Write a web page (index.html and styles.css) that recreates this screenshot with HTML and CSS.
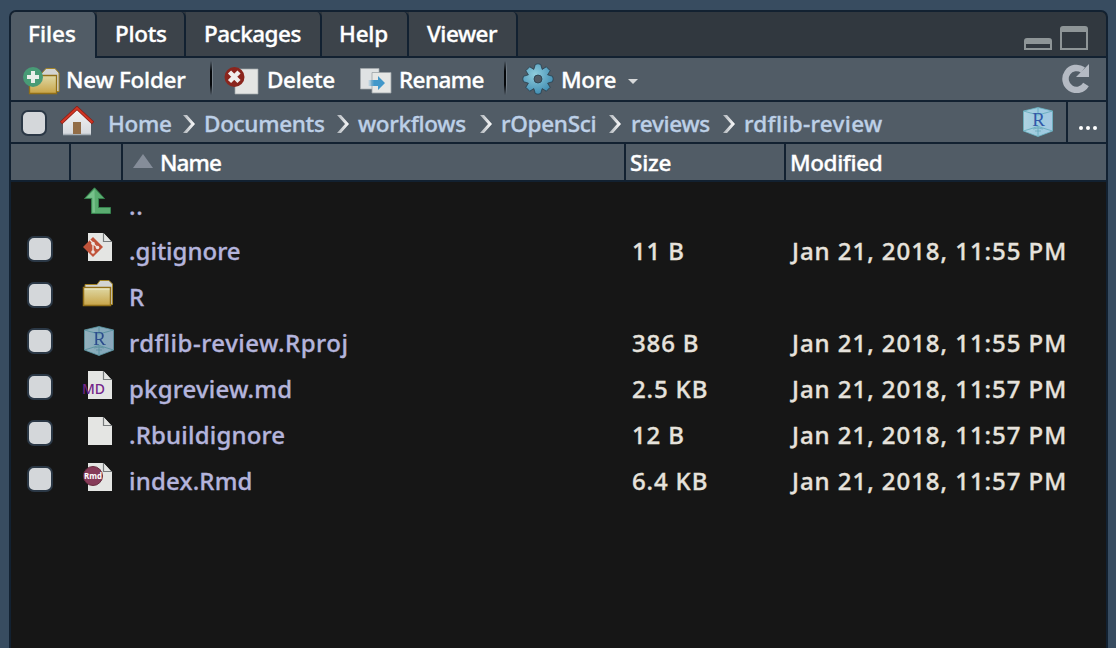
FILE: index.html
```html
<!DOCTYPE html>
<html lang="en">
<head>
<meta charset="utf-8">
<title>Files</title>
<link rel="stylesheet" href="styles.css">
</head>
<body>
<svg class="defs" width="0" height="0" aria-hidden="true">
  <defs>
    <linearGradient id="gold" x1="0" y1="0" x2="0" y2="1"><stop offset="0" stop-color="#dfd9a6"/><stop offset="1" stop-color="#c8a447"/></linearGradient>
    <linearGradient id="cube" x1="0" y1="0" x2="1" y2="0"><stop offset="0" stop-color="#b0d3e2"/><stop offset=".5" stop-color="#9ccbdf"/><stop offset="1" stop-color="#a6c9e4"/></linearGradient>
    <radialGradient id="gear" cx=".4" cy=".35" r=".65"><stop offset="0" stop-color="#8fcddd"/><stop offset="1" stop-color="#438fb4"/></radialGradient>
    <linearGradient id="wall" x1="0" y1="0" x2="0" y2="1"><stop offset="0" stop-color="#f4f4f5"/><stop offset="1" stop-color="#d5d9de"/></linearGradient>
    <linearGradient id="arrow" x1="0" y1="0" x2="1" y2="0"><stop offset="0" stop-color="#4298ca" stop-opacity="0"/><stop offset=".35" stop-color="#4298ca"/></linearGradient>
    <symbol id="folder" viewBox="0 0 32 28">
      <path d="M3 8V5.500H15L18 1.500H27L30.500 5V25.500H27" fill="#d3d4d3" stroke="#a28325"/>
      <path d="M1.500 8.500H28.500V26.500H1.500Z" fill="url(#gold)" stroke="#927019" stroke-width="1.500"/>
      <path d="M2.500 10H27.500" stroke="#f1edcc"/>
    </symbol>
    <symbol id="page" viewBox="0 0 32 28">
      <path d="M6 0H22L30 9V28H6Z" fill="#e4e5e3"/>
      <path d="M21.500 0V8.500H30.500" fill="none" stroke="#777b7c" stroke-width="1.200"/>
      <path d="M22 0L31 9" stroke="#161616" stroke-width=".7"/>
    </symbol>
    <symbol id="rproj" viewBox="0 0 30 30">
      <path d="M15 .5L29.500 4V24L15 29.500L.5 24V4Z" fill="url(#cube)" stroke="#69b5c4" stroke-width=".8"/>
      <path d="M.5 4L15 8L29.500 4M15 20V29M.5 24L15 19.500L29.500 24M15 1V8" fill="none" stroke="#60a8b9" stroke-width=".8"/>
      <text x="15.500" y="18.500" class="cube-letter" text-anchor="middle">R</text>
      <path d="M10 22Q15 20 20 22M12 24H18" fill="none" stroke="#68a4b5" stroke-width=".7"/>
    </symbol>
  </defs>
</svg>

<main class="pane">
  <nav class="tabs">
    <div class="tab active w-files">Files</div>
    <div class="tab w-plots">Plots</div>
    <div class="tab w-packages">Packages</div>
    <div class="tab w-help">Help</div>
    <div class="tab w-viewer">Viewer</div>
    <svg class="window-icons" width="64" height="24" viewBox="0 0 64 24">
      <path fill-rule="evenodd" fill="#8e9597" d="M0 24V15Q0 12 3 12H25Q28 12 28 15V24ZM2 18V22H26V18Z"/>
      <path fill-rule="evenodd" fill="#8e9597" d="M36 24V3Q36 0 39 0H61Q64 0 64 3V24ZM38 6V22H62V6Z"/>
    </svg>
  </nav>

  <div class="toolbar">
    <div class="tool new">
      <svg width="38" height="30" viewBox="0 0 38 30">
        <path d="M18 8L23 2.500H32L36 7V25.500H33" fill="#d3d4d3" stroke="#a28325"/>
        <path d="M6.500 9.500H33.500V27.500H6.500Z" fill="url(#gold)" stroke="#927019" stroke-width="1.300"/>
        <circle cx="10" cy="11" r="10" fill="#489b76"/>
        <path d="M8 5H12V9H16V13H12V17H8V13H4V9H8Z" fill="#e9eeea"/>
      </svg>
      <span>New Folder</span>
    </div>
    <i class="separator"></i>
    <div class="tool delete">
      <svg width="35" height="30" viewBox="0 0 35 30">
        <path d="M11 3H34V28H11Z" fill="#e4e5e3" stroke="#a2a6a9" stroke-width=".7"/>
        <circle cx="10.500" cy="11" r="10" fill="#8b251d"/>
        <path d="M5.500 6L15 15.500M15 6L5.500 15.500" stroke="#f0eeec" stroke-width="4.500"/>
      </svg>
      <span>Delete</span>
    </div>
    <div class="tool rename">
      <svg width="32" height="28" viewBox="0 0 32 28">
        <path d="M.5 1.500H19V22H.5Z" fill="#dfe2e3" stroke="#a5abad" stroke-width=".7"/>
        <path d="M12 5.500H31V26H12Z" fill="#e6e7e5" stroke="#9da3a7" stroke-width=".8"/>
        <path d="M8 13H18V9L25 16L18 23V19H8Z" fill="url(#arrow)"/>
      </svg>
      <span>Rename</span>
    </div>
    <i class="separator"></i>
    <div class="tool more">
      <svg width="32" height="32" viewBox="-16 -16 32 32">
        <g fill="url(#gear)" stroke="#273e4b" stroke-width=".8">
          <path fill-rule="evenodd" d="M-4.200-9.600L-2.700-14.500Q0-16 2.700-14.500L4.200-9.600L8.300-12.200L12.200-8.300L9.600-4.200L14.500-2.700Q16 0 14.500 2.700L9.600 4.200L12.200 8.300L8.300 12.200L4.200 9.600L2.700 14.500Q0 16-2.700 14.500L-4.200 9.600L-8.300 12.200L-12.200 8.300L-9.600 4.200L-14.500 2.700Q-16 0-14.500-2.700L-9.600-4.200L-12.200-8.300L-8.300-12.200ZM4 0A4 4 0 1 0-4 0A4 4 0 1 0 4 0Z"/>
        </g>
      </svg>
      <span>More</span>
      <svg class="caret" width="10" height="5" viewBox="0 0 10 5"><path d="M0 0H10L5 5Z" fill="#d7d9da"/></svg>
    </div>
    <svg class="refresh" width="28" height="30" viewBox="0 0 28 30">
      <path d="M25 21.500A11 11 0 1 1 22 7" fill="none" stroke="#b4bac3" stroke-width="6.500"/>
      <path d="M28 1V14H15L20 9L23 6Z" fill="#b4bac3"/>
    </svg>
  </div>

  <div class="path">
    <i class="check"></i>
    <svg class="house" width="34" height="30" viewBox="0 0 34 30">
      <path d="M3 14L17 2L31 14V29H3Z" fill="url(#wall)"/>
      <path d="M3 28.500H31" stroke="#a7b0b7" stroke-width="1.500"/>
      <path d="M13 16H21V28H13Z" fill="#926d48"/>
      <path d="M1 17L17 2L33 17" fill="none" stroke="#8e1f18" stroke-width="3.500"/>
      <path d="M1.500 16.500L17 2L32.500 16.500" fill="none" stroke="#d13624" stroke-width="2"/>
    </svg>
    <div class="crumb c-home">Home</div>
    <div class="crumb c-documents">Documents</div>
    <div class="crumb c-workflows">workflows</div>
    <div class="crumb c-ropensci">rOpenSci</div>
    <div class="crumb c-reviews">reviews</div>
    <div class="crumb last">rdflib-review</div>
    <svg class="project" width="30" height="30"><use href="#rproj"/></svg>
    <div class="browse"><i></i><i></i><i></i></div>
  </div>

  <div class="grid head">
    <div></div><div></div>
    <div class="name-head"><svg width="20" height="14" viewBox="0 0 20 14"><path d="M0 14L10 0L20 14Z" fill="#858d99"/></svg>Name</div>
    <div class="size-head">Size</div>
    <div class="date-head">Modified</div>
  </div>

  <section class="files">
    <div class="grid row up">
      <div></div>
      <div class="icon"><svg width="32" height="28" viewBox="0 0 32 28"><path d="M12.500 .8L22.500 11.500H16.500V20.500H28.500V26.500H9.500V11.500H2.500Z" fill="#5aac70" stroke="#36814d"/><path d="M12.500 2.500L4.500 10.800H10.500V25.500H13Z" fill="#77c18b"/></svg></div>
      <div class="name">..</div><div></div><div></div>
    </div>
    <div class="grid row">
      <div class="cell-check"><i class="check"></i></div>
      <div class="icon"><svg width="32" height="28" viewBox="0 0 32 28"><use href="#page"/><path d="M1 14L11 4L21 14L11 24Z" fill="#c0533a"/><path d="M8 7L11 10V19M11 10.500L15.500 14.500" stroke="#eee3df" stroke-width="1.300" fill="none"/><circle cx="11" cy="10.500" r="1.800" fill="#eee3df"/><circle cx="11" cy="19" r="1.800" fill="#eee3df"/><circle cx="15.500" cy="14.500" r="1.800" fill="#eee3df"/></svg></div>
      <div class="name">.gitignore</div><div class="size">11 B</div><div class="date">Jan 21, 2018, 11:55 PM</div>
    </div>
    <div class="grid row">
      <div class="cell-check"><i class="check"></i></div>
      <div class="icon"><svg width="32" height="28"><use href="#folder"/></svg></div>
      <div class="name">R</div><div></div><div></div>
    </div>
    <div class="grid row">
      <div class="cell-check"><i class="check"></i></div>
      <div class="icon project-icon"><svg class="dim" width="30" height="30"><use href="#rproj"/></svg></div>
      <div class="name wide">rdflib-review.Rproj</div><div class="size">386 B</div><div class="date">Jan 21, 2018, 11:55 PM</div>
    </div>
    <div class="grid row">
      <div class="cell-check"><i class="check"></i></div>
      <div class="icon"><svg width="32" height="28" viewBox="0 0 32 28"><use href="#page"/><text class="md" x="0" y="22.500" textLength="23" lengthAdjust="spacingAndGlyphs">MD</text></svg></div>
      <div class="name medium">pkgreview.md</div><div class="size">2.5 KB</div><div class="date">Jan 21, 2018, 11:57 PM</div>
    </div>
    <div class="grid row">
      <div class="cell-check"><i class="check"></i></div>
      <div class="icon"><svg width="32" height="28"><use href="#page"/></svg></div>
      <div class="name medium">.Rbuildignore</div><div class="size">12 B</div><div class="date">Jan 21, 2018, 11:57 PM</div>
    </div>
    <div class="grid row">
      <div class="cell-check"><i class="check"></i></div>
      <div class="icon"><svg width="32" height="28" viewBox="0 0 32 28"><use href="#page"/><circle cx="11" cy="13" r="9.500" fill="#873b59" stroke="#692d40"/><text class="rmd" x="2" y="15.500" textLength="18" lengthAdjust="spacingAndGlyphs">Rmd</text></svg></div>
      <div class="name medium">index.Rmd</div><div class="size">6.4 KB</div><div class="date">Jan 21, 2018, 11:57 PM</div>
    </div>
  </section>
</main>
</body>
</html>
```

FILE: styles.css
```css
* { box-sizing: border-box; }

body {
  margin: 0;
  height: 648px;
  overflow: hidden;
  padding: 10px 8px 0 9px;
  background: #384c60;
  color: #fff;
  font: 500 22.5px/30px "Noto Sans", "Open Sans", sans-serif;
  letter-spacing: -0.15px;
  -webkit-text-stroke: 0.35px currentColor;
}

.defs { position: absolute; }
svg { display: block; flex: none; }

.pane {
  height: 650px;
  background: #161616;
  border: 2px solid #122131;
  border-radius: 7px 7px 0 0;
  overflow: hidden;
}

/* Tab strip */
.tabs {
  display: flex;
  height: 46px;
  background: #31383f;
  box-shadow: inset 0 -2px #122131;
}
.tab {
  height: 44px;
  padding: 7px 0 0 18px;
  background: #3c434a;
  border-right: 2px solid #122131;
  border-radius: 0 5px 0 0;
}
.tab.active { height: 46px; background: #515c66; }
.w-files { width: 86px; padding-left: 17px; letter-spacing: 0; }
.w-plots { width: 89px; letter-spacing: -0.3px; }
.w-packages { width: 136px; letter-spacing: -0.5px; }
.w-help { width: 87px; padding-left: 17px; letter-spacing: -0.2px; }
.w-viewer { width: 109px; letter-spacing: -0.5px; }
.window-icons { margin: 14px 18px 0 auto; }

/* Toolbar */
.toolbar {
  display: flex;
  height: 44px;
  background: #515c66;
  border-bottom: 2px solid #122131;
}
.tool { display: flex; letter-spacing: -0.35px; }
.tool span { margin-top: 7px; }
.new { width: 199px; padding-left: 12px; letter-spacing: -0.25px; }
.new svg { margin-top: 8px; }
.new span { margin-left: 5px; }
.separator {
  width: 3px;
  height: 34px;
  margin-top: 3px;
  background: linear-gradient(90deg, #05080b 0 2px, #78828b 2px);
  -webkit-mask-image: linear-gradient(transparent, #000 30%, #000 70%, transparent);
}
.delete { width: 147px; padding-left: 11px; }
.delete svg { margin-top: 8px; }
.delete span { margin-left: 8px; }
.rename { width: 144px; letter-spacing: -0.6px; }
.rename svg { margin-top: 9px; }
.rename span { margin-left: 7px; }
.more { padding-left: 15px; }
.more svg { margin-top: 5px; }
.more span { margin-left: 7px; }
.more .caret { margin: 21px 0 0 12px; }
.refresh { margin: 5px 17px 0 auto; }

/* Breadcrumb path */
.path {
  display: flex;
  height: 42px;
  background: #515c66;
  border-bottom: 2px solid #122131;
  color: #bdd0e7;
}
.check {
  display: block;
  flex: none;
  width: 26px;
  height: 26px;
  border: 2px solid #2b3846;
  border-radius: 7px;
  background: #d4d7da;
}
.path .check { margin: 8px 13px 0 10px; }
.house { margin: 4px 14px 0 0; }
.crumb { display: flex; justify-content: space-between; padding-top: 7px; letter-spacing: -0.3px; }
.crumb:not(.last)::after {
  content: "";
  width: 12px;
  height: 18px;
  margin: 6px 9px 0 0;
  background: linear-gradient(90deg, #acb2b8, #fff);
  clip-path: polygon(0 0, 4px 0, 12px 9px, 4px 18px, 0 18px, 8px 9px);
}
.c-home { width: 96px; }
.c-documents { width: 154px; }
.c-workflows { width: 143px; }
.c-ropensci { width: 129px; }
.c-reviews { width: 114px; padding-left: 1px; }
.last { letter-spacing: 0.3px; }
.project { margin: 5px 13px 0 auto; }
.browse {
  display: flex;
  gap: 3px;
  width: 40px;
  padding: 24px 0 0 11px;
  border-left: 2px solid #122131;
}
.browse i { width: 4px; height: 4px; border-radius: 2px; background: #fff; }
.cube-letter {
  font: 19px "Liberation Serif", serif;
  letter-spacing: 0;
  fill: #3158a8;
  -webkit-text-stroke: 0.4px #3158a8;
}

/* File table */
.grid {
  display: grid;
  grid-template-columns: 60px 52px 503px 160px 1fr;
}
.head {
  height: 38px;
  background: #515c66;
  border-bottom: 2px solid #122131;
}
.head div:not(:last-child) { border-right: 2px solid #122131; }
.head div { padding-top: 4px; }
.name-head { display: flex; letter-spacing: -0.9px; }
.name-head svg { margin: 6px 7px 0 10px; }
.head .size-head { padding-left: 4px; letter-spacing: -0.2px; }
.head .date-head { padding-left: 4px; letter-spacing: -0.4px; }
.row {
  height: 46px;
  font-size: 24px;
  color: #e6e2dc;
}
.row.up { height: 44px; }
.row .name { color: #b4b4dc; padding: 10px 0 0 6px; letter-spacing: 0; }
.row.up .name { padding-top: 9px; letter-spacing: 0.8px; }
.row .wide { letter-spacing: 0.5px; }
.row .medium { letter-spacing: 0.18px; }
.size, .date { padding-top: 10px; letter-spacing: 0.95px; white-space: nowrap; }
.size { padding-left: 6px; letter-spacing: 0.85px; }
.date { padding-left: 6px; }
.cell-check { padding: 10px 0 0 16px; }
.icon { padding: 7px 0 0 11px; }
.row.up .icon { padding-top: 5px; }
.icon.project-icon { padding: 8px 0 0 13px; }
.dim { opacity: 0.82; }
.md { font: 500 13.5px "Noto Sans", sans-serif; letter-spacing: 0; fill: #74258a; -webkit-text-stroke: 0.3px #74258a; }
.rmd { font: bold 9px "Open Sans", sans-serif; letter-spacing: 0; fill: #fff; -webkit-text-stroke: 0; }
```
